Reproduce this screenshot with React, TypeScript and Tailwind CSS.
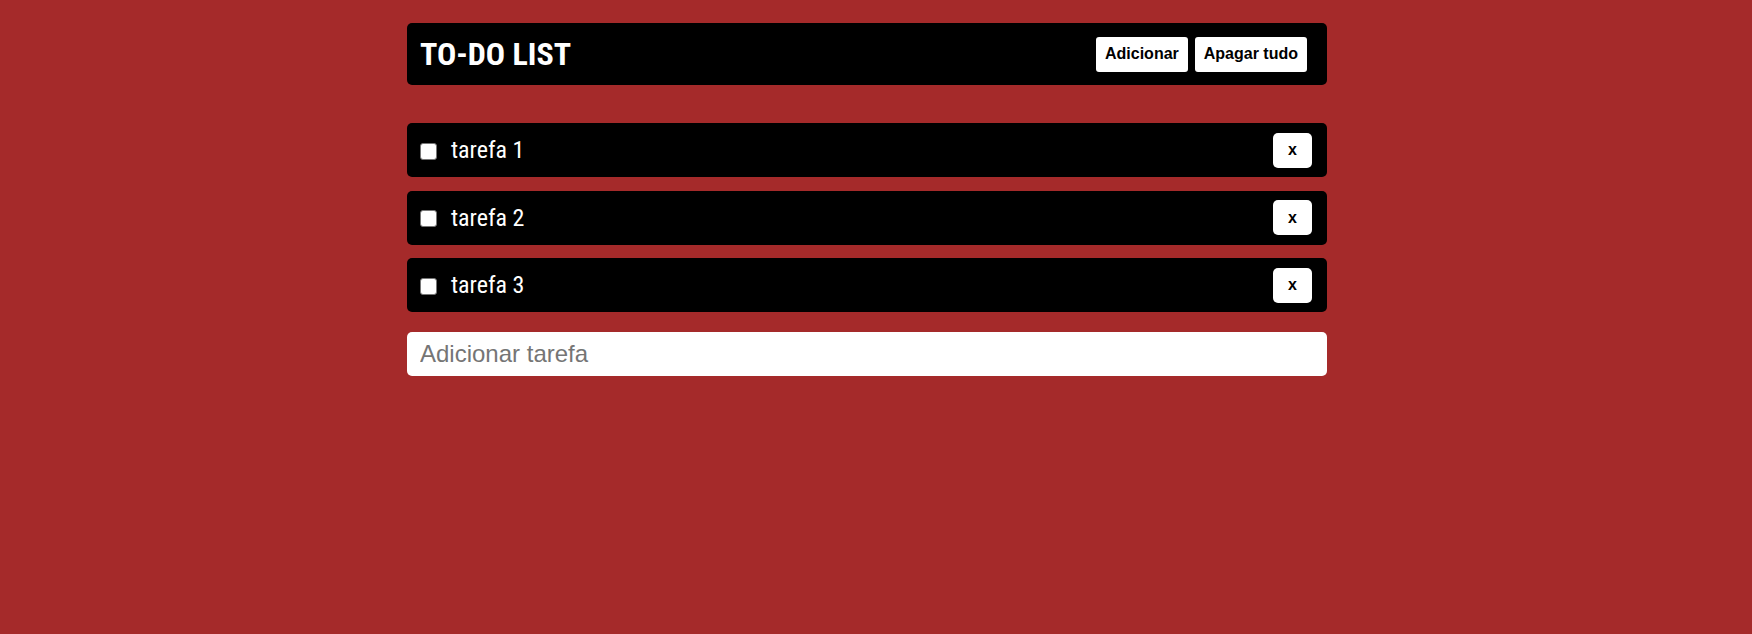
import React, { useState } from 'react';

interface Task {
  id: number;
  text: string;
  done: boolean;
}

export default function App() {
  const [tasks, setTasks] = useState<Task[]>([
    { id: 1, text: 'tarefa 1', done: false },
    { id: 2, text: 'tarefa 2', done: false },
    { id: 3, text: 'tarefa 3', done: false },
  ]);
  const [draft, setDraft] = useState('');

  const addTask = () => {
    if (!draft.trim()) return;
    setTasks([...tasks, { id: Date.now(), text: draft.trim(), done: false }]);
    setDraft('');
  };

  return (
    <div className="min-h-[634px] w-full bg-[#a52a2a] pr-[18px] pt-[23px]">
      <div className="mx-auto w-[920px] flex flex-col">
        {/* header */}
        <div className="h-[62px] bg-black rounded-[5px] flex items-center justify-between pl-[13px] pr-[20px]">
          <h1 className="font-['Roboto_Condensed',Roboto,sans-serif] font-stretch-condensed font-bold text-[32px] text-white leading-none">
            TO-DO LIST
          </h1>
          <div className="flex gap-[7px] font-['Liberation_Sans',Arial,sans-serif] font-bold text-[16px] text-black">
            <button onClick={addTask} className="h-[35px] px-[9px] bg-white rounded-[3px]">
              Adicionar
            </button>
            <button onClick={() => setTasks([])} className="h-[35px] px-[9px] bg-white rounded-[3px]">
              Apagar tudo
            </button>
          </div>
        </div>

        {/* tasks */}
        <div className="mt-[38px] flex flex-col gap-[13.5px]">
          {tasks.map((t) => (
            <div key={t.id} className="h-[54px] bg-black rounded-[5px] flex items-center pl-[13px] pr-[15px]">
              <input
                type="checkbox"
                checked={t.done}
                onChange={() => setTasks(tasks.map((x) => (x.id === t.id ? { ...x, done: !x.done } : x)))}
                className="appearance-none w-[17px] h-[17px] m-0 mt-[2px] shrink-0 bg-white border border-[#767676] rounded-[3px] checked:bg-[#0075ff] checked:border-[#0075ff]"
              />
              <span className="ml-[14px] flex-1 font-['Roboto_Condensed',Roboto,sans-serif] font-stretch-condensed text-[24px] text-white">
                {t.text}
              </span>
              <button
                onClick={() => setTasks(tasks.filter((x) => x.id !== t.id))}
                className="w-[39px] h-[35px] bg-white rounded-[5px] font-['Liberation_Sans',Arial,sans-serif] font-bold text-[16px] text-black"
              >
                x
              </button>
            </div>
          ))}
        </div>

        {/* new task */}
        <input
          value={draft}
          onChange={(e) => setDraft(e.target.value)}
          onKeyDown={(e) => e.key === 'Enter' && addTask()}
          placeholder="Adicionar tarefa"
          className="mt-[20px] h-[44px] w-full bg-white rounded-[5px] px-[13px] font-['Liberation_Sans',Arial,sans-serif] text-[24px] text-black placeholder:text-[#757575] outline-none"
        />
      </div>
    </div>
  );
}
